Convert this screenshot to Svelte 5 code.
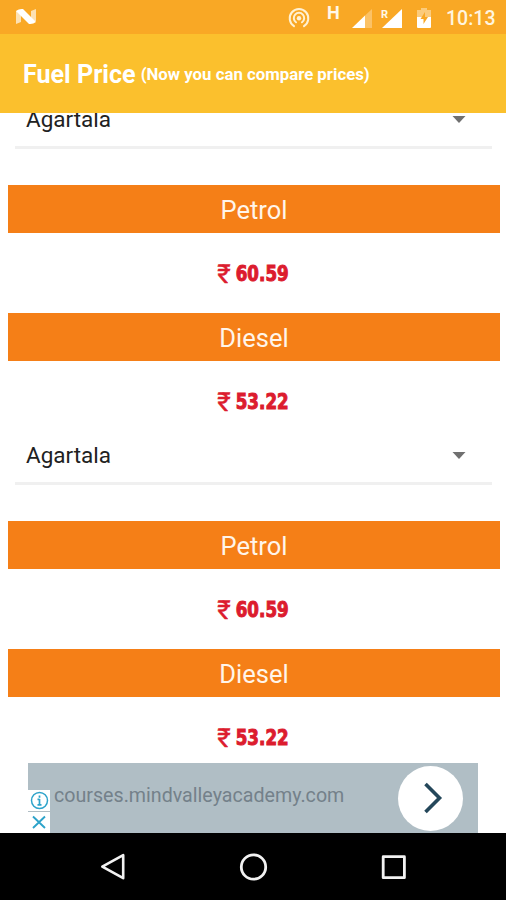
<script>
  const cities = [
    { name: 'Agartala', petrol: '60.59', diesel: '53.22' },
    { name: 'Agartala', petrol: '60.59', diesel: '53.22' },
  ];
</script>

{#snippet fuel(label, price)}
  <h2 class="fuel">{label}</h2>
  <p class="price"><span class="rupee">₹</span><span class="amount">{price}</span></p>
{/snippet}

<div class="screen">
  <div class="status">
    <svg class="nougat" width="22" height="18" viewBox="0 0 22 18" aria-hidden="true">
      <path d="M1 3L6 2V14L1 16ZM16 3L21 1V13L16 15Z" fill="#fff" opacity="0.65" />
      <path d="M1 3Q4 0.5 8 1L21 14Q18 16.5 14 16Z" fill="#fff" />
    </svg>
    <svg class="icons" width="150" height="34" viewBox="0 0 150 34" fill="none" aria-hidden="true">
      <g stroke="#fff1d2" stroke-width="2" stroke-linecap="round">
        <path d="M4 26.2A9.3 9.3 0 1 1 14 26.2" />
        <path d="M6 22.3A5.2 5.2 0 1 1 12 22.3" />
      </g>
      <circle cx="9" cy="18.3" r="2.2" fill="#fff1d2" />
      <path d="M75 15.5L82 9V28H75Z" fill="#fff" opacity="0.3" />
      <path d="M62 28L75 15.5V28Z" fill="#fff" />
      <path d="M92 28L112 9V28Z" fill="#fff" />
      <path d="M127 17V10H131V8H137V10H141V17Z" fill="#fff" opacity="0.4" />
      <path d="M127 17H141V27Q141 28 140 28H128Q127 28 127 27Z" fill="#fff" />
      <path d="M135 12L130.5 19H133.5V24L138 17H135Z" fill="#f9a825" />
      <text x="37" y="19.2" class="hsdpa">H</text>
      <text x="91" y="17.5" class="roaming">R</text>
    </svg>
    <time>10:13</time>
  </div>

  <header>
    <h1>Fuel Price</h1>
    <span class="hint">(Now you can compare prices)</span>
  </header>

  <main>
    {#each cities as city, i (i)}
      <section>
        <div class="city">
          <span>{city.name}</span>
          <svg width="14" height="7" viewBox="0 0 14 7" aria-hidden="true">
            <path d="M0.5 0H13.5L7 7Z" fill="#707070" />
          </svg>
        </div>
        {@render fuel('Petrol', city.petrol)}
        {@render fuel('Diesel', city.diesel)}
      </section>
    {/each}
  </main>

  <aside>
    <div class="ad-tools">
      <span class="tool">
        <svg width="20" height="20" viewBox="0 0 20 20" fill="none" stroke="#2da3ca" aria-hidden="true">
          <circle cx="10.5" cy="9.5" r="8" stroke-width="1.5" />
          <path d="M10.5 4.5V6.7M10.5 8V14M8.5 8.3H10.5M8.5 13.8H12.5" stroke-width="1.7" />
        </svg>
      </span>
      <span class="tool">
        <svg width="16" height="16" viewBox="0 0 16 16" fill="none" stroke="#2da3ca" aria-hidden="true">
          <path d="M2 1.5L14 13M14 1.5L2 13" stroke-width="1.9" />
        </svg>
      </span>
    </div>
    <span class="domain">courses.mindvalleyacademy.com</span>
    <span class="go">
      <svg width="24" height="34" viewBox="0 0 24 34" fill="none" aria-hidden="true">
        <path d="M4.5 3L18.5 17L4.5 31" stroke="#24475a" stroke-width="3.6" />
      </svg>
    </span>
  </aside>

  <nav>
    <svg width="30" height="30" viewBox="0 0 30 30" fill="none" stroke="#f2f2f2" stroke-width="2.6" stroke-linejoin="round" aria-hidden="true">
      <path d="M25.2 3.2V26.2L4.3 14.7Z" />
    </svg>
    <svg width="30" height="30" viewBox="0 0 30 30" fill="none" stroke="#f2f2f2" stroke-width="2.8" aria-hidden="true">
      <circle cx="15.5" cy="15" r="12.2" />
    </svg>
    <svg width="30" height="30" viewBox="0 0 30 30" fill="none" stroke="#f2f2f2" stroke-width="2.8" stroke-linejoin="round" aria-hidden="true">
      <rect x="5.2" y="4.7" width="21.2" height="21" />
    </svg>
  </nav>
</div>

<style>
  .screen {
    width: 506px;
    height: 900px;
    display: flex;
    flex-direction: column;
    overflow: hidden;
    background: #fff;
    font-family: Roboto, "Liberation Sans", sans-serif;
  }

  .status {
    flex: none;
    height: 34px;
    display: flex;
    align-items: center;
    background: #f9a825;
    color: #fff5df;
  }

  .nougat {
    margin-left: 15px;
  }

  .icons {
    margin-left: 253px;
    overflow: visible;
  }

  .hsdpa {
    font-size: 18px;
    font-weight: 700;
    fill: #fff8e8;
  }

  .roaming {
    font-size: 11px;
    font-weight: 700;
    fill: #fff8e8;
  }

  time {
    margin: 3px 0 0 6px;
    font-size: 19.5px;
    font-weight: 500;
  }

  header {
    flex: none;
    height: 79px;
    box-sizing: border-box;
    padding: 0 23px;
    display: flex;
    align-items: center;
    gap: 5px;
    background: #fbc02d;
    color: #fff;
  }

  h1 {
    margin: 2px 0 0;
    font-size: 25.1px;
    font-weight: 700;
    white-space: nowrap;
  }

  .hint {
    margin-top: 1px;
    font-size: 16.8px;
    font-weight: 700;
    white-space: nowrap;
  }

  main {
    flex: none;
    height: 650px;
    overflow: hidden;
  }

  /* The list is scrolled a few pixels under the header */
  section:first-child {
    margin-top: -8px;
  }

  .city {
    height: 44px;
    box-sizing: border-box;
    margin: 0 14px 36px 15px;
    padding: 0 26px 0 11px;
    border-bottom: 3px solid #f0f0f0;
    display: flex;
    justify-content: space-between;
    align-items: flex-start;
    font-size: 22.5px;
    line-height: 28px;
    color: #212121;
  }

  .city svg {
    margin-top: 11px;
  }

  .fuel {
    height: 48px;
    margin: 0 6px 0 8px;
    background: #f57f17;
    color: #fff5ea;
    font-size: 25.5px;
    font-weight: 400;
    line-height: 51px;
    text-align: center;
  }

  .price {
    height: 80px;
    margin: 0;
    display: flex;
    align-items: center;
    justify-content: center;
    gap: 5px;
    color: #dc1c2e;
  }

  .rupee {
    margin-top: 2px;
    font-size: 26px;
    -webkit-text-stroke: 0.4px #dc1c2e;
  }

  .amount {
    font-family: "DejaVu Sans Condensed", "DejaVu Sans", sans-serif;
    font-stretch: condensed;
    font-size: 18.5px;
    font-weight: 700;
    letter-spacing: 0.1px;
    transform: scaleY(1.12);
    -webkit-text-stroke: 0.9px #dc1c2e;
  }

  aside {
    flex: none;
    width: 450px;
    height: 70px;
    margin-left: 28px;
    display: flex;
    align-items: center;
    background: #b0bec5;
  }

  .ad-tools {
    align-self: flex-end;
    width: 22px;
    display: flex;
    flex-direction: column;
    gap: 1px;
  }

  .tool {
    height: 21px;
    display: flex;
    align-items: center;
    justify-content: center;
    background: #fff;
  }

  .domain {
    margin: -6px 0 0 4px;
    font-size: 19.65px;
    color: #74818a;
  }

  .go {
    width: 65px;
    height: 65px;
    margin: 0 15px 0 auto;
    border-radius: 50%;
    display: flex;
    align-items: center;
    justify-content: center;
    background: #fff;
  }

  .go svg {
    margin-left: 4px;
  }

  nav {
    flex: 1;
    display: flex;
    align-items: center;
    justify-content: center;
    gap: 110px;
    background: #000;
  }
</style>
